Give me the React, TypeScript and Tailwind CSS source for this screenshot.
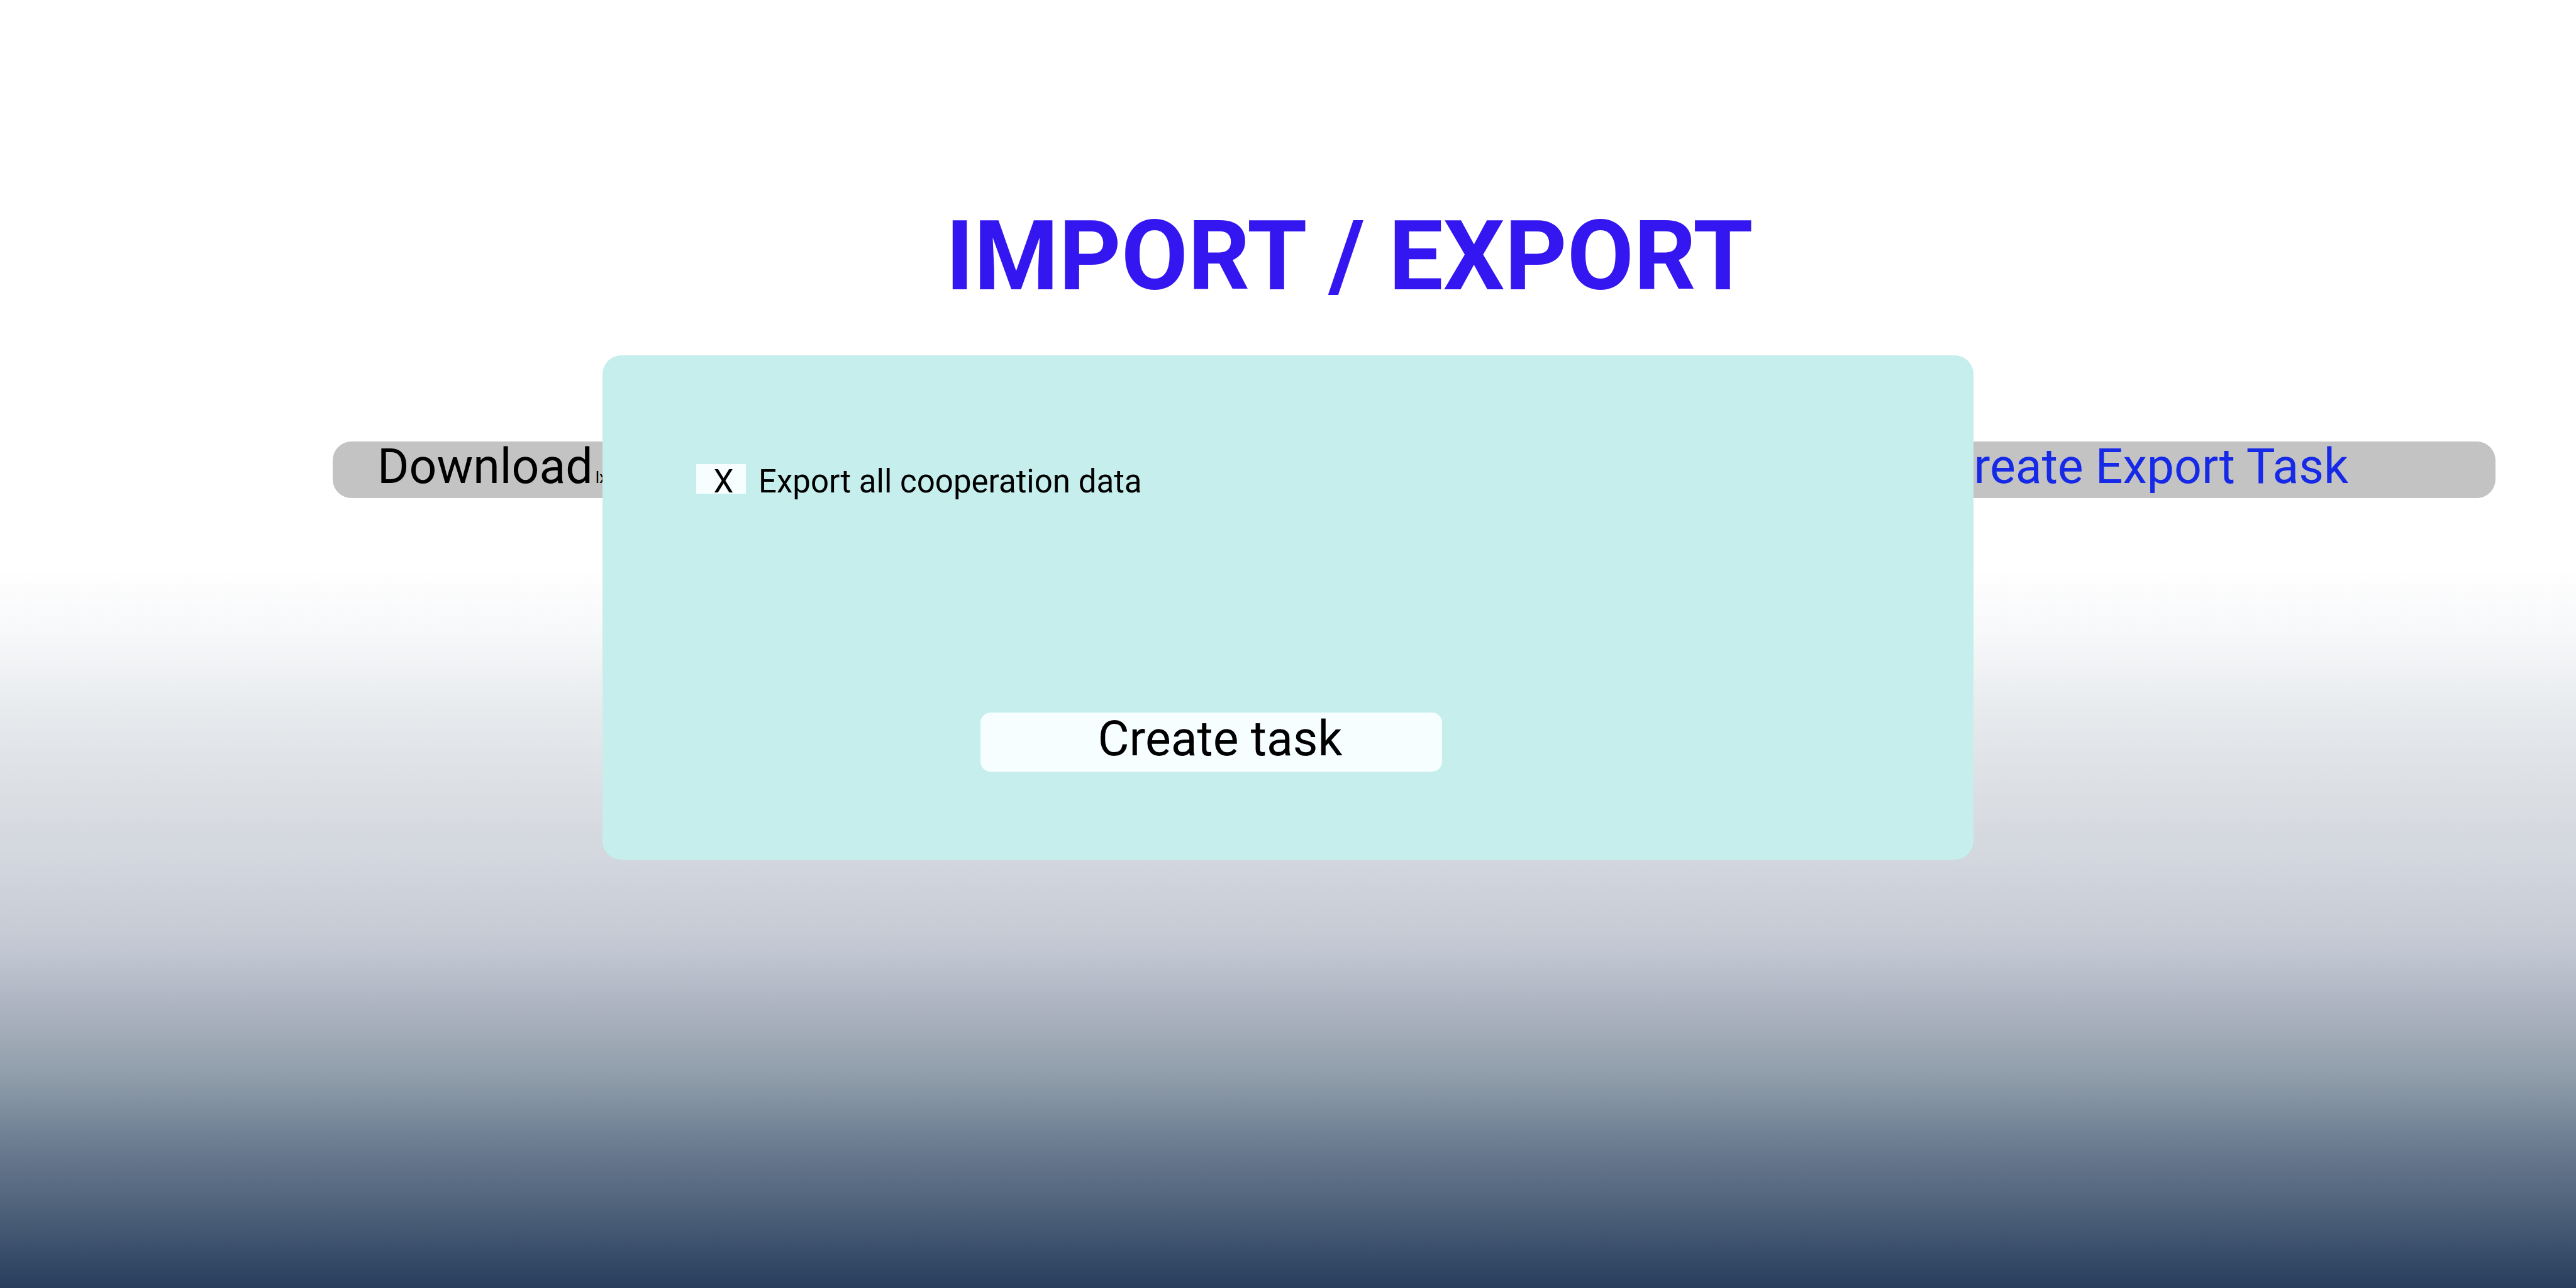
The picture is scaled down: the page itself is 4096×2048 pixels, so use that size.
export default function App() {
  return (
    <main className="min-h-screen bg-[linear-gradient(to_bottom,#ffffff_44%,#f7f8fa_49%,#e8ebee_55%,#dcdfe3_61%,#d2d6de_67%,#c9ced6_71.5%,#c0c6d2_74%,#a9b0bd_79%,#8d9ba8_84%,#6e7e93_88.5%,#566980_92.5%,#283e5d_100%)] bg-white pt-[318px] font-[Roboto,sans-serif]">
      <h1 className="pl-[195px] text-center text-[154px] leading-[180px] font-bold text-[#3416f0]">
        IMPORT / EXPORT
      </h1>

      <div className="mt-[67px] grid">
        <nav
          aria-label="Import and export"
          className="col-start-1 row-start-1 mt-[137px] flex items-start justify-between pr-32 pl-[529px] text-[77px] leading-[80px]"
        >
          <button
            type="button"
            className="flex h-[90px] w-2/5 items-start rounded-[30px] bg-[#c3c3c3] pl-[71px] text-black"
          >
            <span>
              Download<span className="ml-1 text-[26px]">lx</span>
            </span>
          </button>
          <button
            type="button"
            className="flex h-[90px] w-2/5 items-start justify-end rounded-[30px] bg-[#c3c3c3] pr-[234px] text-[#1629e6]"
          >
            Create Export Task
          </button>
        </nav>

        <form
          aria-label="Create export task"
          onSubmit={(event) => event.preventDefault()}
          className="z-10 col-start-1 row-start-1 mx-auto w-full max-w-[2180px] rounded-[30px] bg-[#c5eeed] px-[149px] pt-[173px] pb-[140px] text-black"
        >
          <label className="flex w-fit items-start gap-5 text-[51px] leading-[56px]">
            <span className="grid">
              <input
                type="checkbox"
                defaultChecked
                className="peer col-start-1 row-start-1 h-[47px] w-[79px] appearance-none bg-[#f6feff]"
              />
              <span
                aria-hidden="true"
                className="invisible col-start-1 row-start-1 pl-2 text-center peer-checked:visible"
              >
                X
              </span>
            </span>
            Export all cooperation data
          </label>
          <button
            type="submit"
            className="mt-[339px] ml-[452px] flex h-[94px] w-[734px] items-start justify-center rounded-2xl bg-[#f6feff] pt-0.5 pl-7 text-[77px] leading-[80px]"
          >
            Create task
          </button>
        </form>
      </div>
    </main>
  );
}
